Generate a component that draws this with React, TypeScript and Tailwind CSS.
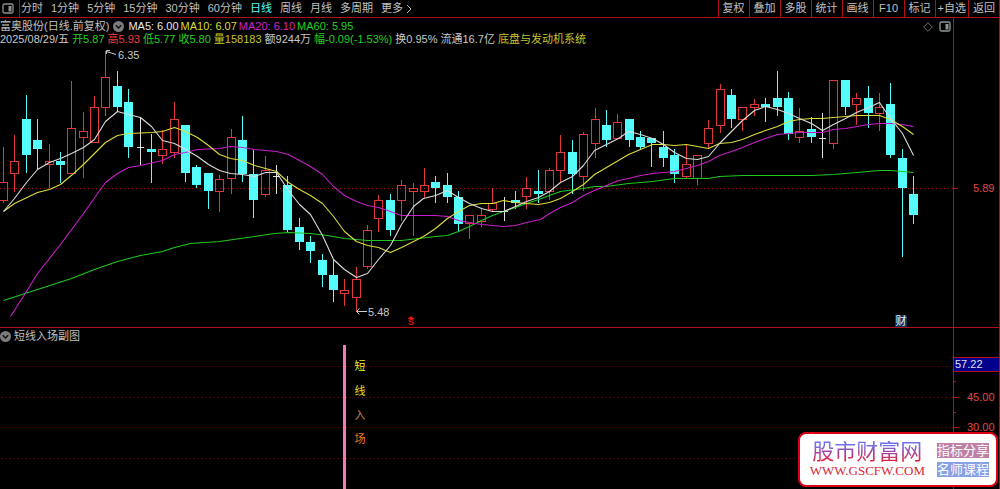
import { useState } from 'react';
import clsx from 'clsx';

const PERIODS = ['分时', '1分钟', '5分钟', '15分钟', '30分钟', '60分钟', '日线', '周线', '月线', '多周期'];

const TOOLS = ['复权', '叠加', '多股', '统计', '画线', 'F10', '标记', '+自选', '返回'];

const AVERAGES = [
  { label: 'MA5: 6.00', color: 'text-[#e8e8e8]' },
  { label: 'MA10: 6.07', color: 'text-[#dcdc2c]' },
  { label: 'MA20: 6.10', color: 'text-[#d020d0]' },
  { label: 'MA60: 5.95', color: 'text-[#20d020]' },
];

const QUOTE = [
  { label: '2025/08/29/五', color: 'text-[#c8c8c8]' },
  { label: '开5.87', color: 'text-[#20d020]' },
  { label: '高5.93', color: 'text-[#f03c3c]' },
  { label: '低5.77', color: 'text-[#20d020]' },
  { label: '收5.80', color: 'text-[#20d020]' },
  { label: '量158183', color: 'text-[#c4c42c]' },
  { label: '额9244万', color: 'text-[#c8c8c8]' },
  { label: '幅-0.09(-1.53%)', color: 'text-[#20d020]' },
  { label: '换0.95%', color: 'text-[#c8c8c8]' },
  { label: '流通16.7亿', color: 'text-[#c8c8c8]' },
  { label: '底盘与发动机系统', color: 'text-[#c4c42c]' },
];

type Kind = 'up' | 'down' | 'flat';

// kind, high, body top, body bottom, low
const CANDLES: [Kind, number, number, number, number][] = [
  ['up', 147, 182, 201, 203],
  ['up', 135, 161, 174, 192],
  ['down', 95, 119, 155, 173],
  ['down', 119, 140, 149, 169],
  ['up', 144, 161, 165, 188],
  ['down', 152, 161, 165, 183],
  ['up', 81, 128, 174, 174],
  ['up', 112, 131, 138, 178],
  ['up', 96, 107, 143, 143],
  ['up', 51, 77, 108, 116],
  ['down', 71, 86, 107, 111],
  ['down', 89, 102, 147, 158],
  ['flat', 117, 147, 148, 165],
  ['down', 134, 149, 152, 183],
  ['up', 130, 149, 156, 164],
  ['up', 102, 119, 153, 158],
  ['down', 125, 125, 173, 182],
  ['down', 165, 167, 185, 188],
  ['down', 173, 173, 191, 209],
  ['up', 175, 179, 192, 212],
  ['up', 129, 137, 179, 194],
  ['down', 116, 140, 174, 182],
  ['down', 150, 174, 200, 218],
  ['up', 156, 170, 195, 197],
  ['flat', 165, 176, 177, 194],
  ['down', 176, 185, 230, 232],
  ['down', 218, 227, 242, 250],
  ['down', 236, 242, 251, 263],
  ['down', 254, 260, 275, 287],
  ['down', 260, 275, 290, 302],
  ['up', 279, 290, 294, 306],
  ['up', 267, 279, 298, 312],
  ['up', 225, 230, 267, 269],
  ['up', 195, 200, 219, 232],
  ['down', 194, 200, 230, 236],
  ['up', 180, 185, 201, 221],
  ['up', 183, 188, 192, 236],
  ['up', 168, 185, 192, 198],
  ['down', 176, 182, 188, 203],
  ['down', 173, 185, 197, 203],
  ['down', 191, 197, 224, 232],
  ['up', 215, 215, 224, 239],
  ['up', 209, 215, 222, 227],
  ['up', 188, 203, 210, 211],
  ['flat', 197, 211, 212, 221],
  ['down', 191, 200, 203, 209],
  ['up', 177, 188, 197, 209],
  ['down', 170, 191, 194, 203],
  ['up', 168, 170, 192, 200],
  ['up', 135, 152, 171, 182],
  ['down', 140, 152, 174, 194],
  ['up', 132, 134, 177, 191],
  ['up', 108, 119, 144, 158],
  ['down', 110, 125, 140, 147],
  ['up', 114, 122, 139, 139],
  ['down', 119, 119, 140, 147],
  ['down', 131, 137, 147, 150],
  ['down', 138, 138, 143, 167],
  ['down', 131, 147, 158, 167],
  ['down', 149, 155, 174, 183],
  ['up', 144, 164, 177, 178],
  ['up', 155, 155, 179, 185],
  ['up', 120, 128, 144, 148],
  ['up', 84, 89, 126, 133],
  ['down', 89, 95, 119, 128],
  ['up', 107, 107, 120, 131],
  ['up', 99, 104, 108, 116],
  ['down', 98, 104, 107, 122],
  ['down', 71, 98, 107, 116],
  ['down', 92, 98, 134, 140],
  ['up', 108, 131, 138, 143],
  ['down', 117, 129, 137, 143],
  ['flat', 113, 138, 139, 158],
  ['up', 80, 80, 144, 149],
  ['down', 80, 80, 107, 115],
  ['up', 93, 98, 105, 125],
  ['down', 86, 98, 113, 128],
  ['up', 93, 107, 114, 131],
  ['down', 83, 104, 155, 158],
  ['down', 149, 158, 188, 257],
  ['down', 176, 194, 215, 224],
];

const LINES = [
  {
    id: 'ma60',
    color: '#1ec81e',
    points:
      '3,300 37,289 71,278 94,269 117,261 140,255 162,251 174,247 190,243 219,241 254,236 274,233 288,232 310,233 327,235 344,238 367,240 401,240 435,236 447,235 458,231 469,226 481,220 492,215 503,211 515,207 526,203 538,199 549,195 560,191 583,188 594,186 606,186 628,183 652,181 674,178 708,178 719,176 742,175 779,175 811,175 833,174 856,172 879,170 890,170 902,171 913,172',
  },
  {
    id: 'ma20',
    color: '#c81ec8',
    points:
      '10,316 26,291 37,273 60,244 83,213 105,182 117,173 128,167 140,165 162,160 174,154 185,152 197,149 219,148 230,146 242,147 254,149 276,151 288,154 299,160 310,166 322,174 333,186 344,195 356,201 367,205 378,207 390,211 401,215 435,215 447,216 458,220 469,222 481,224 492,225 503,226 515,225 526,222 540,219 549,213 560,207 572,202 583,195 594,190 606,185 618,180 628,178 640,175 652,173 674,171 686,168 697,165 708,161 719,155 731,151 742,147 754,142 765,138 777,134 788,133 799,132 822,132 833,129 845,128 868,124 879,123 890,123 902,124 913,126',
  },
  {
    id: 'ma10',
    color: '#dcdc3c',
    points:
      '3,211 14,203 37,192 49,189 60,184 72,174 83,164 105,142 117,135 128,133 151,132 162,131 174,127 185,131 197,137 208,145 219,154 230,158 242,160 254,165 265,168 276,171 288,182 299,189 310,195 322,203 333,216 344,231 356,241 367,245 378,247 390,252 401,247 423,236 435,228 447,218 458,211 469,205 481,203 492,203 503,200 515,202 526,203 538,204 549,202 560,198 572,191 583,184 594,174 606,167 618,160 628,154 640,149 652,144 663,144 674,145 686,144 697,146 708,148 719,143 731,142 742,139 754,134 765,130 777,126 788,121 799,119 811,118 822,118 833,117 845,116 856,115 879,115 890,119 902,126 913,134',
  },
  {
    id: 'ma5',
    color: '#dcdcdc',
    points:
      '3,211 14,198 26,182 37,169 49,162 60,158 71,153 83,147 94,139 105,121 117,111 128,114 140,117 151,126 162,140 174,143 185,149 197,156 208,164 219,170 230,173 242,174 254,176 265,172 276,172 288,190 299,204 310,214 322,235 333,259 344,269 356,277 367,273 378,259 390,245 401,224 413,206 423,198 435,195 447,190 458,197 469,203 481,208 492,211 503,211 515,206 526,201 538,197 549,191 560,182 572,176 583,165 594,150 606,144 618,138 628,131 640,134 652,138 663,144 674,152 686,158 697,159 708,156 719,143 731,131 742,120 754,110 765,106 777,109 788,113 799,118 811,123 822,130 833,124 845,118 856,112 868,107 879,102 890,118 902,133 913,155',
  },
];

const SIGNAL = [
  { char: '短', y: 370, color: '#f0f02c' },
  { char: '线', y: 395, color: '#f0dc2c' },
  { char: '入', y: 419, color: '#d08a5a' },
  { char: '场', y: 443, color: '#f07820' },
];

function Candle({ index, data }: { index: number; data: [Kind, number, number, number, number] }) {
  const [kind, high, top, bottom, low] = data;
  const x = Math.round(3 + index * 11.375);

  if (kind === 'flat') {
    return (
      <g fill="#e0e0e0">
        <rect x={x} y={high} width={1} height={low - high} />
        <rect x={x - 3} y={top} width={7} height={1} />
      </g>
    );
  }
  if (kind === 'down') {
    return (
      <g fill="#54fcfc">
        <rect x={x} y={high} width={1} height={low - high} />
        <rect x={x - 4} y={top} width={9} height={bottom - top} />
      </g>
    );
  }
  return (
    <g fill="#e03838">
      <rect x={x} y={high} width={1} height={top - high} />
      <rect x={x} y={bottom} width={1} height={low - bottom} />
      <rect x={x - 3.5} y={top + 0.5} width={8} height={bottom - top - 1} fill="none" stroke="#e03838" />
    </g>
  );
}

function PanelIcon({ className }: { className?: string }) {
  return (
    <svg viewBox="0 0 12 11" className={clsx('w-3 h-[11px] shrink-0', className)} fill="none">
      <rect x="1" y="1" width="10" height="9" rx="1.5" stroke="currentColor" strokeWidth="1.3" />
      <rect x="6.5" y="3" width="3" height="5.5" fill="currentColor" />
    </svg>
  );
}

function CollapseButton({ label }: { label: string }) {
  return (
    <button aria-label={label} className="shrink-0">
      <svg viewBox="0 0 11 11" className="w-[11px] h-[11px]">
        <circle cx="5.5" cy="5.5" r="5.5" fill="#7c7c7c" />
        <path d="M2.8 4.2 L5.5 7 L8.2 4.2" fill="none" stroke="#101010" strokeWidth="1.4" />
      </svg>
    </button>
  );
}

function PriceChart() {
  return (
    <svg viewBox="0 47 1000 280" className="w-full h-auto" fontSize="11">
      <g shapeRendering="crispEdges">
        <line x1="0" x2="953" y1="188.5" y2="188.5" stroke="#a01414" strokeDasharray="1 3" />
        <rect x="953" y="47" width="1" height="280" fill="#b01018" />
        <rect x="954" y="188" width="4" height="1" fill="#b01018" />
        {CANDLES.map((candle, i) => (
          <Candle key={i} index={i} data={candle} />
        ))}
      </g>
      {LINES.map((line) => (
        <polyline
          key={line.id}
          points={line.points}
          transform="translate(0.5 0.5)"
          fill="none"
          stroke={line.color}
          strokeWidth="1.1"
          strokeLinejoin="round"
        />
      ))}

      {/* Highest and lowest price */}
      <g stroke="#c8c8c8" fill="none">
        <path d="M106.500 51.500 L116 54.500 M110 50.500 H106.500 V54" />
        <path d="M356.500 311.500 H367 M359.500 308.500 L356.500 311.500 L359.500 314.500" />
      </g>
      <text x="118" y="59" fill="#c8c8c8">6.35</text>
      <text x="368" y="316" fill="#c8c8c8">5.48</text>

      {/* Event marks */}
      <path d="M407.500 319 L411 316 L414.500 319 Z" fill="#f01010" />
      <text x="411" y="325" fontSize="9" fontWeight="bold" textAnchor="middle" fill="#f01010">S</text>
      <rect x="895" y="315" width="12" height="12" fill="#0c3058" />
      <text x="901" y="325" textAnchor="middle" fill="#e8f4ff">财</text>

      <text x="973" y="192" fill="#e04848">5.89</text>
    </svg>
  );
}

function SignalChart() {
  return (
    <svg viewBox="0 344 1000 145" className="w-full h-auto" fontSize="11">
      <g shapeRendering="crispEdges">
        {[366, 397, 427, 458].map((y) => (
          <line key={y} x1="2" x2="953" y1={y + 0.5} y2={y + 0.5} stroke="#641414" strokeDasharray="1 3" />
        ))}
        <rect x="953" y="344" width="1" height="145" fill="#b01018" />
        {[397, 427, 458].map((y) => (
          <rect key={y} x="954" y={y} width="5" height="1" fill="#b01018" />
        ))}
        {[381, 412].map((y) => (
          <rect key={y} x="954" y={y} width="2" height="1" fill="#b01018" />
        ))}
        <rect x="343" y="345" width="3" height="144" fill="#f878b4" />
        <rect x="953.5" y="357.500" width="46" height="14" fill="#00008c" stroke="#b01018" />
      </g>
      {SIGNAL.map((item) => (
        <text key={item.char} x="360" y={item.y} textAnchor="middle" fill={item.color}>
          {item.char}
        </text>
      ))}
      <text x="955" y="368" fill="#e0e0f0">57.22</text>
      <text x="967" y="401" fill="#e04848">45.00</text>
      <text x="967" y="431" fill="#e04848">30.00</text>
    </svg>
  );
}

export default function App() {
  const [period, setPeriod] = useState('日线');

  return (
    <div className="relative min-h-screen overflow-hidden bg-black text-[11px] leading-[13px] whitespace-nowrap text-[#c0c0c0] font-['Liberation_Sans','Noto_Sans_CJK_SC',sans-serif]">
      {/* Toolbar */}
      <nav className="flex h-[18px] items-stretch justify-between border-b border-[#b01018]">
        <div className="flex items-stretch">
          <button aria-label="侧栏" className="flex w-5 items-center border-r border-[#b01018] pl-[2px]">
            <PanelIcon className="text-[#909090]" />
          </button>
          <div className="flex items-center gap-2 pl-px">
            {PERIODS.map((item) => (
              <button
                key={item}
                onClick={() => setPeriod(item)}
                className={clsx(item === period && 'text-[#54fcfc]')}
              >
                {item}
              </button>
            ))}
            <button className="flex items-center gap-[3px]">
              更多
              <svg viewBox="0 0 6 10" className="w-[6px] h-[10px]" fill="none" stroke="currentColor">
                <path d="M1 1 L5 5 L1 9" />
              </svg>
            </button>
          </div>
        </div>
        <div className="flex items-stretch pr-px">
          {TOOLS.map((item) => (
            <button key={item} className="min-w-[31px] border-l border-[#b01018] px-[2px]">
              {item}
            </button>
          ))}
        </div>
      </nav>

      {/* Price pane */}
      <section>
        <div className="flex">
          <div className="flex flex-1 justify-between pt-[2px] pb-px">
            <div>
              <div className="flex h-[13px] items-center">
                <h1>富奥股份(日线.前复权)</h1>
                <div className="flex items-center gap-1 pl-1">
                  <CollapseButton label="主图指标" />
                  <div className="flex gap-[2px]">
                    {AVERAGES.map((item) => (
                      <span key={item.label} className={item.color}>{item.label}</span>
                    ))}
                  </div>
                </div>
              </div>
              <div className="flex h-[13px] items-center gap-[3px]">
                {QUOTE.map((item) => (
                  <span key={item.label} className={item.color}>{item.label}</span>
                ))}
              </div>
            </div>
            <div className="flex h-[13px] items-center gap-[6px] pr-[2px] text-[#707070]">
              <button aria-label="标记点">
                <svg viewBox="0 0 10 10" className="w-[10px] h-[10px]" fill="none" stroke="currentColor">
                  <path d="M5 0.700 L9.300 5 L5 9.300 L0.700 5 Z" />
                </svg>
              </button>
              <button aria-label="右侧栏">
                <PanelIcon className="text-[#8c9898]" />
              </button>
            </div>
          </div>
          <div className="w-[4.7%] border-l border-[#b01018]" />
        </div>
        <PriceChart />
      </section>

      {/* Indicator pane */}
      <section className="border-t border-[#b01018]">
        <div className="flex h-4">
          <div className="flex flex-1 items-center gap-[3px]">
            <CollapseButton label="副图指标" />
            <h2>短线入场副图</h2>
          </div>
          <div className="w-[4.7%] border-l border-[#b01018]" />
        </div>
        <SignalChart />
      </section>

      <div className="absolute inset-y-0 right-0 w-px bg-[#b01018]" />

      {/* Site badge */}
      <div className="absolute right-[2px] bottom-[2px] flex items-center gap-3 rounded-lg border-2 border-[#dc0014] bg-white py-[7px] pr-[7px] pl-[10px]">
        <div className="text-center">
          <p className="bg-linear-to-b from-[#7070e8] from-20% via-[#a040a0] to-[#e02040] to-90% bg-clip-text text-[22px] leading-[22px] text-transparent">
            股市财富网
          </p>
          <a href="#" className="block font-['Liberation_Serif',serif] text-[13px] leading-[15px] text-[#d82838]">
            WWW.GSCFW.COM
          </a>
        </div>
        <div className="flex flex-col gap-1 text-[13px] leading-[15px] text-white">
          <span className="bg-[#c080a4]">指标分享</span>
          <span className="bg-[#88a0e4]">名师课程</span>
        </div>
      </div>
    </div>
  );
}
